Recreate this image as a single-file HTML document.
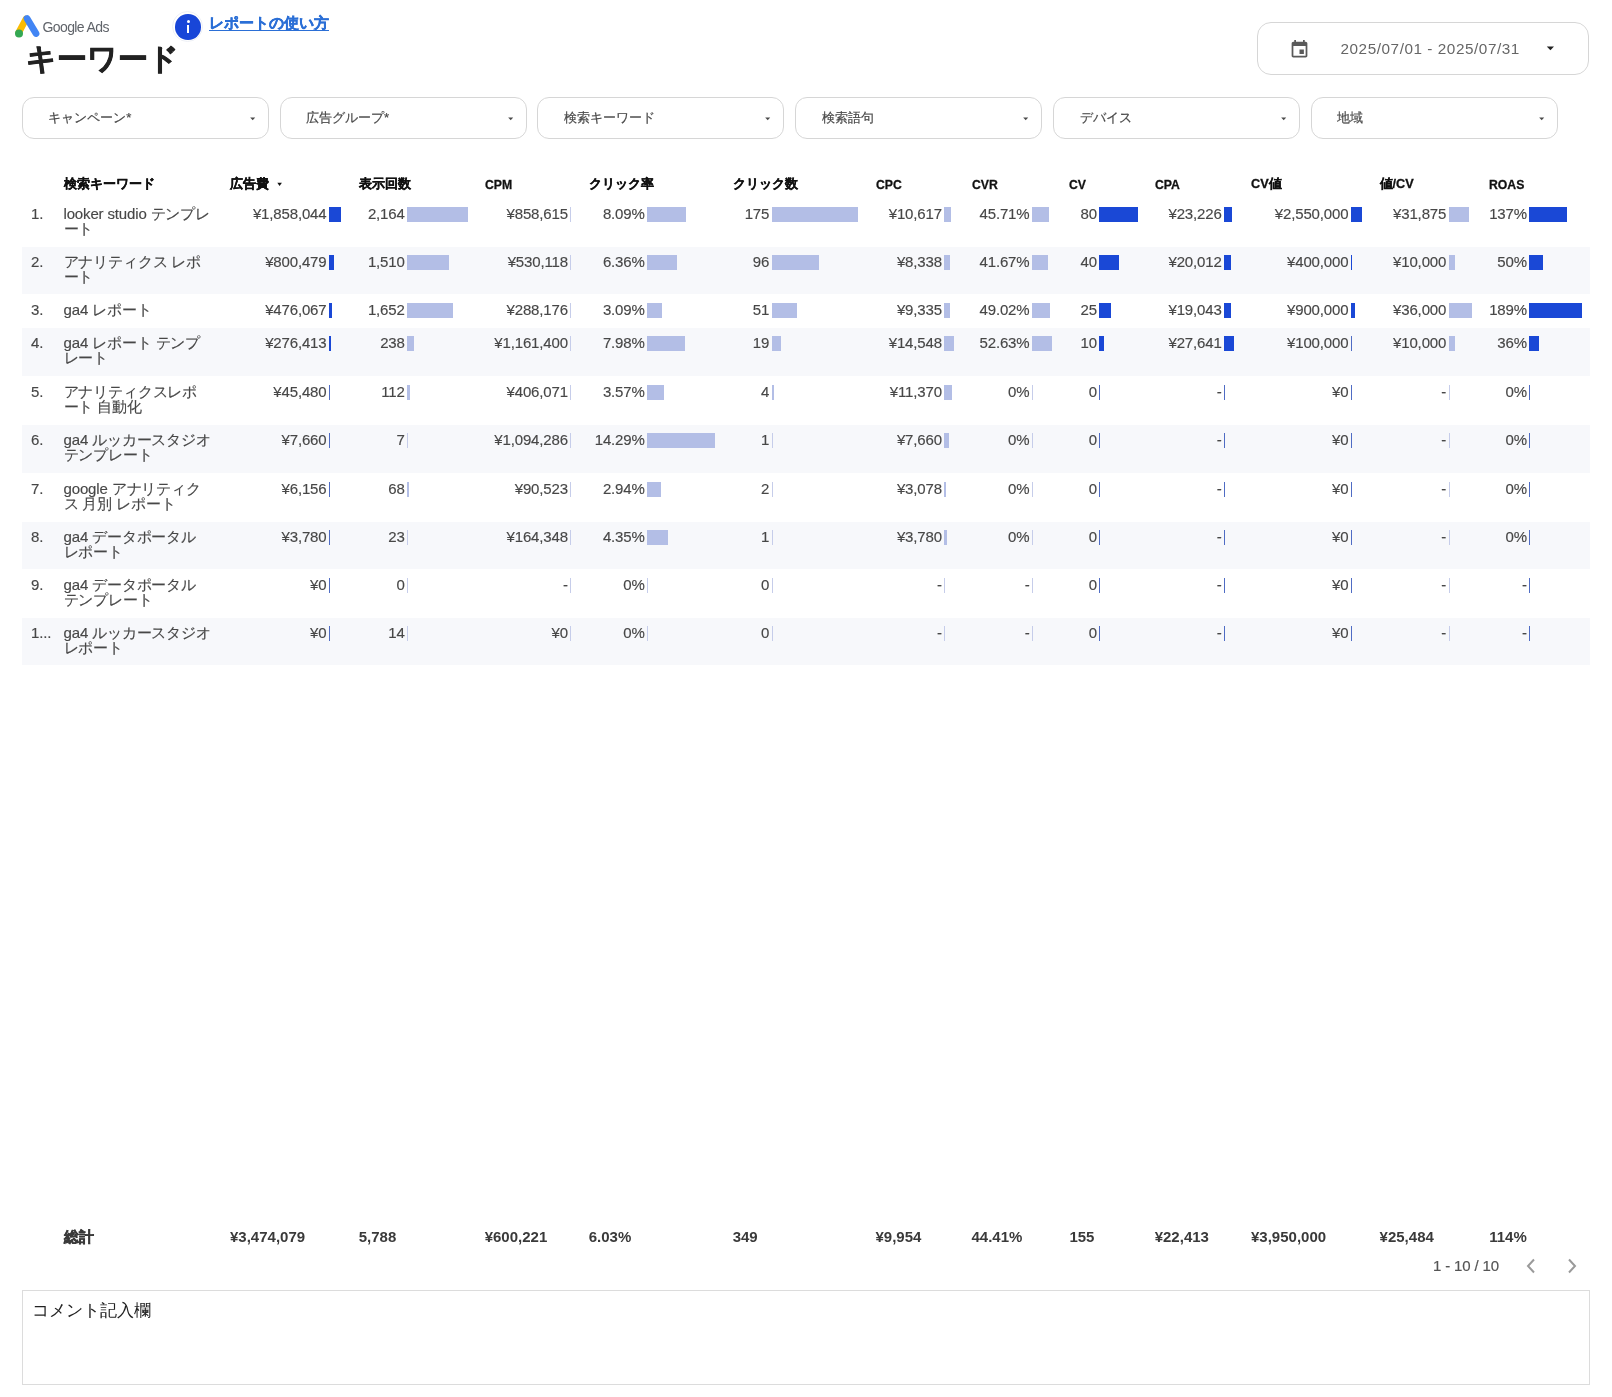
<!DOCTYPE html>
<html lang="ja"><head><meta charset="utf-8"><style>
html,body{margin:0;padding:0;background:#fff;width:1612px;height:1397px;overflow:hidden;position:relative;font-family:"Liberation Sans", sans-serif;}
.a{position:absolute;white-space:nowrap;}
.d{position:absolute;white-space:nowrap;font-size:15px;line-height:15px;color:#474747;letter-spacing:-0.15px;-webkit-text-stroke:0.15px #474747;}
.r{text-align:right;}
.h{position:absolute;white-space:nowrap;font-size:12.7px;line-height:15px;font-weight:900;color:#111;-webkit-text-stroke:0.3px #111;}
.t{position:absolute;white-space:nowrap;font-size:15px;line-height:15px;font-weight:bold;color:#3a3a3a;}
.b{position:absolute;height:15px;}
.st{position:absolute;left:22px;width:1568px;background:#f7f8fb;}
.fb{position:absolute;top:96.5px;width:245px;height:40.5px;border:1px solid #d6d6d6;border-radius:12px;background:#fff;}
.fl{position:absolute;left:25.5px;top:12.2px;font-size:13.2px;line-height:15px;color:#4a4a4a;-webkit-text-stroke:0.2px #4a4a4a;}
.ar{position:absolute;width:0;height:0;border-left:3px solid transparent;border-right:3px solid transparent;border-top:3px solid #333;}
#w{position:absolute;left:0;top:0;width:1612px;height:1397px;will-change:transform;}
</style></head><body><div id="w">

<svg class="a" style="left:12px;top:13px" width="32" height="27" viewBox="0 0 32 27">
<line x1="14" y1="6" x2="7" y2="19" stroke="#fbbc04" stroke-width="6.8" stroke-linecap="round"/>
<line x1="15" y1="5.5" x2="24" y2="20.5" stroke="#4285f4" stroke-width="6.8" stroke-linecap="round"/>
<circle cx="7" cy="20.5" r="4" fill="#34a853"/>
</svg>
<div class="a" style="left:42.5px;top:19px;font-size:14px;line-height:17px;color:#60646a;letter-spacing:-0.6px">Google Ads</div>
<div class="a" style="left:172.3px;top:11px;width:29px;height:29px;border-radius:50%;border:1.5px solid #eef0f5;background:#fff"></div>
<div class="a" style="left:175.3px;top:14px;width:25.5px;height:25.5px;border-radius:50%;background:#1846d8"></div>
<div class="a" style="left:186.5px;top:19.8px;width:3.2px;height:3.2px;border-radius:50%;background:#fff"></div>
<div class="a" style="left:186.8px;top:25px;width:2.6px;height:7.8px;background:#fff"></div>
<div class="a" style="left:209px;top:13px;font-size:15px;line-height:20px;font-weight:900;color:#2b6fd6;-webkit-text-stroke:0.4px #2b6fd6;text-decoration:underline;text-underline-offset:2px">レポートの使い方</div>
<div class="a" style="left:26px;top:41px;font-size:30px;line-height:36px;font-weight:900;color:#222;-webkit-text-stroke:0.7px #222">キーワード</div>
<div class="a" style="left:1257px;top:21.5px;width:330px;height:51px;border:1px solid #d6d6d6;border-radius:14px;background:#fff"></div>
<svg class="a" style="left:1289px;top:38.8px" width="21" height="21" viewBox="0 0 24 24"><path fill="#5a5a5a" d="M17 12h-5v5h5v-5zM16 1v2H8V1H6v2H5c-1.11 0-1.99.9-1.99 2L3 19c0 1.1.89 2 2 2h14c1.1 0 2-.9 2-2V5c0-1.1-.9-2-2-2h-1V1h-2zm3 18H5V8h14v11z"/></svg>
<div class="a" style="left:1340.5px;top:39.8px;font-size:15.3px;line-height:18px;color:#666;letter-spacing:0.55px">2025/07/01 - 2025/07/31</div>
<svg class="a" style="left:1544px;top:44px" width="14" height="10"><polygon points="2.8,2.6 10,2.6 6.4,6.2" fill="#222"/></svg>
<div class="fb" style="left:21.8px"><div class="fl">キャンペーン*</div><svg class="a" style="left:224px;top:17.2px" width="12" height="8"><polygon points="3.2,2.6 8.2,2.6 5.7,5.2" fill="#4a4a4a"/></svg></div>
<div class="fb" style="left:279.6px"><div class="fl">広告グループ*</div><svg class="a" style="left:224px;top:17.2px" width="12" height="8"><polygon points="3.2,2.6 8.2,2.6 5.7,5.2" fill="#4a4a4a"/></svg></div>
<div class="fb" style="left:537.4px"><div class="fl">検索キーワード</div><svg class="a" style="left:224px;top:17.2px" width="12" height="8"><polygon points="3.2,2.6 8.2,2.6 5.7,5.2" fill="#4a4a4a"/></svg></div>
<div class="fb" style="left:795.2px"><div class="fl">検索語句</div><svg class="a" style="left:224px;top:17.2px" width="12" height="8"><polygon points="3.2,2.6 8.2,2.6 5.7,5.2" fill="#4a4a4a"/></svg></div>
<div class="fb" style="left:1053.0px"><div class="fl">デバイス</div><svg class="a" style="left:224px;top:17.2px" width="12" height="8"><polygon points="3.2,2.6 8.2,2.6 5.7,5.2" fill="#4a4a4a"/></svg></div>
<div class="fb" style="left:1310.8px"><div class="fl">地域</div><svg class="a" style="left:224px;top:17.2px" width="12" height="8"><polygon points="3.2,2.6 8.2,2.6 5.7,5.2" fill="#4a4a4a"/></svg></div>
<div class="h" style="left:63.7px;top:177px">検索キーワード</div>
<div class="h" style="left:230px;top:177px">広告費</div>
<div class="h" style="left:358.7px;top:177px">表示回数</div>
<div class="h" style="left:484.7px;top:176.5px;font-size:13.6px;transform:scaleX(0.9);transform-origin:0 0">CPM</div>
<div class="h" style="left:588.7px;top:177px">クリック率</div>
<div class="h" style="left:732.7px;top:177px">クリック数</div>
<div class="h" style="left:875.5px;top:176.5px;font-size:13.6px;transform:scaleX(0.9);transform-origin:0 0">CPC</div>
<div class="h" style="left:971.5px;top:176.5px;font-size:13.6px;transform:scaleX(0.9);transform-origin:0 0">CVR</div>
<div class="h" style="left:1069.4px;top:176.5px;font-size:13.6px;transform:scaleX(0.9);transform-origin:0 0">CV</div>
<div class="h" style="left:1154.7px;top:176.5px;font-size:13.6px;transform:scaleX(0.9);transform-origin:0 0">CPA</div>
<div class="h" style="left:1251px;top:177px">CV値</div>
<div class="h" style="left:1379.6px;top:177px">値/CV</div>
<div class="h" style="left:1489.2px;top:176.5px;font-size:13.6px;transform:scaleX(0.9);transform-origin:0 0">ROAS</div>
<svg class="a" style="left:274px;top:180px" width="12" height="10"><polygon points="3.3,2.8 7.9,2.8 5.6,6.1" fill="#111"/></svg>
<div class="st" style="top:246.5px;height:47.5px"></div>
<div class="st" style="top:328px;height:48px"></div>
<div class="st" style="top:425px;height:47.5px"></div>
<div class="st" style="top:522px;height:47.200000000000045px"></div>
<div class="st" style="top:618px;height:47px"></div>
<div class="d" style="left:31px;top:205.7px">1.</div>
<div class="d" style="left:63.5px;top:205.7px">looker studio テンプレ</div>
<div class="d" style="left:63.5px;top:220.7px">ート</div>
<div class="d r" style="right:1285.5px;top:205.7px">¥1,858,044</div>
<div class="b" style="left:328.8px;top:206.7px;width:12.0px;background:#1a48d6"></div>
<div class="d r" style="right:1207.3px;top:205.7px">2,164</div>
<div class="b" style="left:407px;top:206.7px;width:60.7px;background:#b3bee6"></div>
<div class="d r" style="right:1044.1px;top:205.7px">¥858,615</div>
<div class="b" style="left:570.2px;top:206.7px;width:1.3px;background:#c6cdea"></div>
<div class="d r" style="right:967.3px;top:205.7px">8.09%</div>
<div class="b" style="left:647px;top:206.7px;width:38.7px;background:#b3bee6"></div>
<div class="d r" style="right:842.8px;top:205.7px">175</div>
<div class="b" style="left:771.5px;top:206.7px;width:86.8px;background:#b3bee6"></div>
<div class="d r" style="right:670.0999999999999px;top:205.7px">¥10,617</div>
<div class="b" style="left:944.2px;top:206.7px;width:7.2px;background:#b3bee6"></div>
<div class="d r" style="right:582.5px;top:205.7px">45.71%</div>
<div class="b" style="left:1031.8px;top:206.7px;width:17.5px;background:#b3bee6"></div>
<div class="d r" style="right:515.0999999999999px;top:205.7px">80</div>
<div class="b" style="left:1099.2px;top:206.7px;width:38.7px;background:#1a48d6"></div>
<div class="d r" style="right:390.39999999999986px;top:205.7px">¥23,226</div>
<div class="b" style="left:1223.9px;top:206.7px;width:8.4px;background:#1a48d6"></div>
<div class="d r" style="right:263.5999999999999px;top:205.7px">¥2,550,000</div>
<div class="b" style="left:1350.7px;top:206.7px;width:11.0px;background:#1a48d6"></div>
<div class="d r" style="right:165.79999999999995px;top:205.7px">¥31,875</div>
<div class="b" style="left:1448.5px;top:206.7px;width:20.8px;background:#b3bee6"></div>
<div class="d r" style="right:85.09999999999991px;top:205.7px">137%</div>
<div class="b" style="left:1529.2px;top:206.7px;width:38.0px;background:#1a48d6"></div>
<div class="d" style="left:31px;top:253.8px">2.</div>
<div class="d" style="left:63.5px;top:253.8px">アナリティクス レポ</div>
<div class="d" style="left:63.5px;top:268.8px">ート</div>
<div class="d r" style="right:1285.5px;top:253.8px">¥800,479</div>
<div class="b" style="left:328.8px;top:254.8px;width:5.2px;background:#1a48d6"></div>
<div class="d r" style="right:1207.3px;top:253.8px">1,510</div>
<div class="b" style="left:407px;top:254.8px;width:42.4px;background:#b3bee6"></div>
<div class="d r" style="right:1044.1px;top:253.8px">¥530,118</div>
<div class="b" style="left:570.2px;top:254.8px;width:1.3px;background:#c6cdea"></div>
<div class="d r" style="right:967.3px;top:253.8px">6.36%</div>
<div class="b" style="left:647px;top:254.8px;width:30.4px;background:#b3bee6"></div>
<div class="d r" style="right:842.8px;top:253.8px">96</div>
<div class="b" style="left:771.5px;top:254.8px;width:47.6px;background:#b3bee6"></div>
<div class="d r" style="right:670.0999999999999px;top:253.8px">¥8,338</div>
<div class="b" style="left:944.2px;top:254.8px;width:5.6px;background:#b3bee6"></div>
<div class="d r" style="right:582.5px;top:253.8px">41.67%</div>
<div class="b" style="left:1031.8px;top:254.8px;width:15.9px;background:#b3bee6"></div>
<div class="d r" style="right:515.0999999999999px;top:253.8px">40</div>
<div class="b" style="left:1099.2px;top:254.8px;width:19.4px;background:#1a48d6"></div>
<div class="d r" style="right:390.39999999999986px;top:253.8px">¥20,012</div>
<div class="b" style="left:1223.9px;top:254.8px;width:7.2px;background:#1a48d6"></div>
<div class="d r" style="right:263.5999999999999px;top:253.8px">¥400,000</div>
<div class="b" style="left:1350.7px;top:254.8px;width:1.7px;background:#1a48d6"></div>
<div class="d r" style="right:165.79999999999995px;top:253.8px">¥10,000</div>
<div class="b" style="left:1448.5px;top:254.8px;width:6.5px;background:#b3bee6"></div>
<div class="d r" style="right:85.09999999999991px;top:253.8px">50%</div>
<div class="b" style="left:1529.2px;top:254.8px;width:13.9px;background:#1a48d6"></div>
<div class="d" style="left:31px;top:301.9px">3.</div>
<div class="d" style="left:63.5px;top:301.9px">ga4 レポート</div>
<div class="d r" style="right:1285.5px;top:301.9px">¥476,067</div>
<div class="b" style="left:328.8px;top:302.9px;width:3.1px;background:#1a48d6"></div>
<div class="d r" style="right:1207.3px;top:301.9px">1,652</div>
<div class="b" style="left:407px;top:302.9px;width:46.3px;background:#b3bee6"></div>
<div class="d r" style="right:1044.1px;top:301.9px">¥288,176</div>
<div class="b" style="left:570.2px;top:302.9px;width:1.3px;background:#c6cdea"></div>
<div class="d r" style="right:967.3px;top:301.9px">3.09%</div>
<div class="b" style="left:647px;top:302.9px;width:14.8px;background:#b3bee6"></div>
<div class="d r" style="right:842.8px;top:301.9px">51</div>
<div class="b" style="left:771.5px;top:302.9px;width:25.3px;background:#b3bee6"></div>
<div class="d r" style="right:670.0999999999999px;top:301.9px">¥9,335</div>
<div class="b" style="left:944.2px;top:302.9px;width:6.3px;background:#b3bee6"></div>
<div class="d r" style="right:582.5px;top:301.9px">49.02%</div>
<div class="b" style="left:1031.8px;top:302.9px;width:18.7px;background:#b3bee6"></div>
<div class="d r" style="right:515.0999999999999px;top:301.9px">25</div>
<div class="b" style="left:1099.2px;top:302.9px;width:12.1px;background:#1a48d6"></div>
<div class="d r" style="right:390.39999999999986px;top:301.9px">¥19,043</div>
<div class="b" style="left:1223.9px;top:302.9px;width:6.9px;background:#1a48d6"></div>
<div class="d r" style="right:263.5999999999999px;top:301.9px">¥900,000</div>
<div class="b" style="left:1350.7px;top:302.9px;width:3.9px;background:#1a48d6"></div>
<div class="d r" style="right:165.79999999999995px;top:301.9px">¥36,000</div>
<div class="b" style="left:1448.5px;top:302.9px;width:23.5px;background:#b3bee6"></div>
<div class="d r" style="right:85.09999999999991px;top:301.9px">189%</div>
<div class="b" style="left:1529.2px;top:302.9px;width:52.4px;background:#1a48d6"></div>
<div class="d" style="left:31px;top:335.2px">4.</div>
<div class="d" style="left:63.5px;top:335.2px">ga4 レポート テンプ</div>
<div class="d" style="left:63.5px;top:350.2px">レート</div>
<div class="d r" style="right:1285.5px;top:335.2px">¥276,413</div>
<div class="b" style="left:328.8px;top:336.2px;width:1.8px;background:#1a48d6"></div>
<div class="d r" style="right:1207.3px;top:335.2px">238</div>
<div class="b" style="left:407px;top:336.2px;width:6.7px;background:#b3bee6"></div>
<div class="d r" style="right:1044.1px;top:335.2px">¥1,161,400</div>
<div class="b" style="left:570.2px;top:336.2px;width:1.3px;background:#c6cdea"></div>
<div class="d r" style="right:967.3px;top:335.2px">7.98%</div>
<div class="b" style="left:647px;top:336.2px;width:38.2px;background:#b3bee6"></div>
<div class="d r" style="right:842.8px;top:335.2px">19</div>
<div class="b" style="left:771.5px;top:336.2px;width:9.4px;background:#b3bee6"></div>
<div class="d r" style="right:670.0999999999999px;top:335.2px">¥14,548</div>
<div class="b" style="left:944.2px;top:336.2px;width:9.8px;background:#b3bee6"></div>
<div class="d r" style="right:582.5px;top:335.2px">52.63%</div>
<div class="b" style="left:1031.8px;top:336.2px;width:20.1px;background:#b3bee6"></div>
<div class="d r" style="right:515.0999999999999px;top:335.2px">10</div>
<div class="b" style="left:1099.2px;top:336.2px;width:4.8px;background:#1a48d6"></div>
<div class="d r" style="right:390.39999999999986px;top:335.2px">¥27,641</div>
<div class="b" style="left:1223.9px;top:336.2px;width:10.0px;background:#1a48d6"></div>
<div class="d r" style="right:263.5999999999999px;top:335.2px">¥100,000</div>
<div class="b" style="left:1350.7px;top:336.2px;width:1.3px;background:#4f6cc4"></div>
<div class="d r" style="right:165.79999999999995px;top:335.2px">¥10,000</div>
<div class="b" style="left:1448.5px;top:336.2px;width:6.5px;background:#b3bee6"></div>
<div class="d r" style="right:85.09999999999991px;top:335.2px">36%</div>
<div class="b" style="left:1529.2px;top:336.2px;width:10.0px;background:#1a48d6"></div>
<div class="d" style="left:31px;top:383.7px">5.</div>
<div class="d" style="left:63.5px;top:383.7px">アナリティクスレポ</div>
<div class="d" style="left:63.5px;top:398.7px">ート 自動化</div>
<div class="d r" style="right:1285.5px;top:383.7px">¥45,480</div>
<div class="b" style="left:328.8px;top:384.7px;width:1.3px;background:#4f6cc4"></div>
<div class="d r" style="right:1207.3px;top:383.7px">112</div>
<div class="b" style="left:407px;top:384.7px;width:3.1px;background:#b3bee6"></div>
<div class="d r" style="right:1044.1px;top:383.7px">¥406,071</div>
<div class="b" style="left:570.2px;top:384.7px;width:1.3px;background:#c6cdea"></div>
<div class="d r" style="right:967.3px;top:383.7px">3.57%</div>
<div class="b" style="left:647px;top:384.7px;width:17.1px;background:#b3bee6"></div>
<div class="d r" style="right:842.8px;top:383.7px">4</div>
<div class="b" style="left:771.5px;top:384.7px;width:2.0px;background:#b3bee6"></div>
<div class="d r" style="right:670.0999999999999px;top:383.7px">¥11,370</div>
<div class="b" style="left:944.2px;top:384.7px;width:7.7px;background:#b3bee6"></div>
<div class="d r" style="right:582.5px;top:383.7px">0%</div>
<div class="b" style="left:1031.8px;top:384.7px;width:1.3px;background:#c6cdea"></div>
<div class="d r" style="right:515.0999999999999px;top:383.7px">0</div>
<div class="b" style="left:1099.2px;top:384.7px;width:1.3px;background:#4f6cc4"></div>
<div class="d r" style="right:390.39999999999986px;top:383.7px">-</div>
<div class="b" style="left:1223.9px;top:384.7px;width:1.3px;background:#4f6cc4"></div>
<div class="d r" style="right:263.5999999999999px;top:383.7px">¥0</div>
<div class="b" style="left:1350.7px;top:384.7px;width:1.3px;background:#4f6cc4"></div>
<div class="d r" style="right:165.79999999999995px;top:383.7px">-</div>
<div class="b" style="left:1448.5px;top:384.7px;width:1.3px;background:#c6cdea"></div>
<div class="d r" style="right:85.09999999999991px;top:383.7px">0%</div>
<div class="b" style="left:1529.2px;top:384.7px;width:1.3px;background:#4f6cc4"></div>
<div class="d" style="left:31px;top:432.3px">6.</div>
<div class="d" style="left:63.5px;top:432.3px">ga4 ルッカースタジオ</div>
<div class="d" style="left:63.5px;top:447.3px">テンプレート</div>
<div class="d r" style="right:1285.5px;top:432.3px">¥7,660</div>
<div class="b" style="left:328.8px;top:433.3px;width:1.3px;background:#4f6cc4"></div>
<div class="d r" style="right:1207.3px;top:432.3px">7</div>
<div class="b" style="left:407px;top:433.3px;width:1.3px;background:#c6cdea"></div>
<div class="d r" style="right:1044.1px;top:432.3px">¥1,094,286</div>
<div class="b" style="left:570.2px;top:433.3px;width:1.3px;background:#c6cdea"></div>
<div class="d r" style="right:967.3px;top:432.3px">14.29%</div>
<div class="b" style="left:647px;top:433.3px;width:68.4px;background:#b3bee6"></div>
<div class="d r" style="right:842.8px;top:432.3px">1</div>
<div class="b" style="left:771.5px;top:433.3px;width:1.3px;background:#c6cdea"></div>
<div class="d r" style="right:670.0999999999999px;top:432.3px">¥7,660</div>
<div class="b" style="left:944.2px;top:433.3px;width:5.2px;background:#b3bee6"></div>
<div class="d r" style="right:582.5px;top:432.3px">0%</div>
<div class="b" style="left:1031.8px;top:433.3px;width:1.3px;background:#c6cdea"></div>
<div class="d r" style="right:515.0999999999999px;top:432.3px">0</div>
<div class="b" style="left:1099.2px;top:433.3px;width:1.3px;background:#4f6cc4"></div>
<div class="d r" style="right:390.39999999999986px;top:432.3px">-</div>
<div class="b" style="left:1223.9px;top:433.3px;width:1.3px;background:#4f6cc4"></div>
<div class="d r" style="right:263.5999999999999px;top:432.3px">¥0</div>
<div class="b" style="left:1350.7px;top:433.3px;width:1.3px;background:#4f6cc4"></div>
<div class="d r" style="right:165.79999999999995px;top:432.3px">-</div>
<div class="b" style="left:1448.5px;top:433.3px;width:1.3px;background:#c6cdea"></div>
<div class="d r" style="right:85.09999999999991px;top:432.3px">0%</div>
<div class="b" style="left:1529.2px;top:433.3px;width:1.3px;background:#4f6cc4"></div>
<div class="d" style="left:31px;top:480.6px">7.</div>
<div class="d" style="left:63.5px;top:480.6px">google アナリティク</div>
<div class="d" style="left:63.5px;top:495.6px">ス 月別 レポート</div>
<div class="d r" style="right:1285.5px;top:480.6px">¥6,156</div>
<div class="b" style="left:328.8px;top:481.6px;width:1.3px;background:#4f6cc4"></div>
<div class="d r" style="right:1207.3px;top:480.6px">68</div>
<div class="b" style="left:407px;top:481.6px;width:1.9px;background:#b3bee6"></div>
<div class="d r" style="right:1044.1px;top:480.6px">¥90,523</div>
<div class="b" style="left:570.2px;top:481.6px;width:1.3px;background:#c6cdea"></div>
<div class="d r" style="right:967.3px;top:480.6px">2.94%</div>
<div class="b" style="left:647px;top:481.6px;width:14.1px;background:#b3bee6"></div>
<div class="d r" style="right:842.8px;top:480.6px">2</div>
<div class="b" style="left:771.5px;top:481.6px;width:1.3px;background:#c6cdea"></div>
<div class="d r" style="right:670.0999999999999px;top:480.6px">¥3,078</div>
<div class="b" style="left:944.2px;top:481.6px;width:2.1px;background:#b3bee6"></div>
<div class="d r" style="right:582.5px;top:480.6px">0%</div>
<div class="b" style="left:1031.8px;top:481.6px;width:1.3px;background:#c6cdea"></div>
<div class="d r" style="right:515.0999999999999px;top:480.6px">0</div>
<div class="b" style="left:1099.2px;top:481.6px;width:1.3px;background:#4f6cc4"></div>
<div class="d r" style="right:390.39999999999986px;top:480.6px">-</div>
<div class="b" style="left:1223.9px;top:481.6px;width:1.3px;background:#4f6cc4"></div>
<div class="d r" style="right:263.5999999999999px;top:480.6px">¥0</div>
<div class="b" style="left:1350.7px;top:481.6px;width:1.3px;background:#4f6cc4"></div>
<div class="d r" style="right:165.79999999999995px;top:480.6px">-</div>
<div class="b" style="left:1448.5px;top:481.6px;width:1.3px;background:#c6cdea"></div>
<div class="d r" style="right:85.09999999999991px;top:480.6px">0%</div>
<div class="b" style="left:1529.2px;top:481.6px;width:1.3px;background:#4f6cc4"></div>
<div class="d" style="left:31px;top:528.8px">8.</div>
<div class="d" style="left:63.5px;top:528.8px">ga4 データポータル</div>
<div class="d" style="left:63.5px;top:543.8px">レポート</div>
<div class="d r" style="right:1285.5px;top:528.8px">¥3,780</div>
<div class="b" style="left:328.8px;top:529.8px;width:1.3px;background:#4f6cc4"></div>
<div class="d r" style="right:1207.3px;top:528.8px">23</div>
<div class="b" style="left:407px;top:529.8px;width:1.3px;background:#c6cdea"></div>
<div class="d r" style="right:1044.1px;top:528.8px">¥164,348</div>
<div class="b" style="left:570.2px;top:529.8px;width:1.3px;background:#c6cdea"></div>
<div class="d r" style="right:967.3px;top:528.8px">4.35%</div>
<div class="b" style="left:647px;top:529.8px;width:20.8px;background:#b3bee6"></div>
<div class="d r" style="right:842.8px;top:528.8px">1</div>
<div class="b" style="left:771.5px;top:529.8px;width:1.3px;background:#c6cdea"></div>
<div class="d r" style="right:670.0999999999999px;top:528.8px">¥3,780</div>
<div class="b" style="left:944.2px;top:529.8px;width:2.5px;background:#b3bee6"></div>
<div class="d r" style="right:582.5px;top:528.8px">0%</div>
<div class="b" style="left:1031.8px;top:529.8px;width:1.3px;background:#c6cdea"></div>
<div class="d r" style="right:515.0999999999999px;top:528.8px">0</div>
<div class="b" style="left:1099.2px;top:529.8px;width:1.3px;background:#4f6cc4"></div>
<div class="d r" style="right:390.39999999999986px;top:528.8px">-</div>
<div class="b" style="left:1223.9px;top:529.8px;width:1.3px;background:#4f6cc4"></div>
<div class="d r" style="right:263.5999999999999px;top:528.8px">¥0</div>
<div class="b" style="left:1350.7px;top:529.8px;width:1.3px;background:#4f6cc4"></div>
<div class="d r" style="right:165.79999999999995px;top:528.8px">-</div>
<div class="b" style="left:1448.5px;top:529.8px;width:1.3px;background:#c6cdea"></div>
<div class="d r" style="right:85.09999999999991px;top:528.8px">0%</div>
<div class="b" style="left:1529.2px;top:529.8px;width:1.3px;background:#4f6cc4"></div>
<div class="d" style="left:31px;top:576.6px">9.</div>
<div class="d" style="left:63.5px;top:576.6px">ga4 データポータル</div>
<div class="d" style="left:63.5px;top:591.6px">テンプレート</div>
<div class="d r" style="right:1285.5px;top:576.6px">¥0</div>
<div class="b" style="left:328.8px;top:577.6px;width:1.3px;background:#4f6cc4"></div>
<div class="d r" style="right:1207.3px;top:576.6px">0</div>
<div class="b" style="left:407px;top:577.6px;width:1.3px;background:#c6cdea"></div>
<div class="d r" style="right:1044.1px;top:576.6px">-</div>
<div class="b" style="left:570.2px;top:577.6px;width:1.3px;background:#c6cdea"></div>
<div class="d r" style="right:967.3px;top:576.6px">0%</div>
<div class="b" style="left:647px;top:577.6px;width:1.3px;background:#c6cdea"></div>
<div class="d r" style="right:842.8px;top:576.6px">0</div>
<div class="b" style="left:771.5px;top:577.6px;width:1.3px;background:#c6cdea"></div>
<div class="d r" style="right:670.0999999999999px;top:576.6px">-</div>
<div class="b" style="left:944.2px;top:577.6px;width:1.3px;background:#c6cdea"></div>
<div class="d r" style="right:582.5px;top:576.6px">-</div>
<div class="b" style="left:1031.8px;top:577.6px;width:1.3px;background:#c6cdea"></div>
<div class="d r" style="right:515.0999999999999px;top:576.6px">0</div>
<div class="b" style="left:1099.2px;top:577.6px;width:1.3px;background:#4f6cc4"></div>
<div class="d r" style="right:390.39999999999986px;top:576.6px">-</div>
<div class="b" style="left:1223.9px;top:577.6px;width:1.3px;background:#4f6cc4"></div>
<div class="d r" style="right:263.5999999999999px;top:576.6px">¥0</div>
<div class="b" style="left:1350.7px;top:577.6px;width:1.3px;background:#4f6cc4"></div>
<div class="d r" style="right:165.79999999999995px;top:576.6px">-</div>
<div class="b" style="left:1448.5px;top:577.6px;width:1.3px;background:#c6cdea"></div>
<div class="d r" style="right:85.09999999999991px;top:576.6px">-</div>
<div class="b" style="left:1529.2px;top:577.6px;width:1.3px;background:#4f6cc4"></div>
<div class="d" style="left:31px;top:625.2px">1...</div>
<div class="d" style="left:63.5px;top:625.2px">ga4 ルッカースタジオ</div>
<div class="d" style="left:63.5px;top:640.2px">レポート</div>
<div class="d r" style="right:1285.5px;top:625.2px">¥0</div>
<div class="b" style="left:328.8px;top:626.2px;width:1.3px;background:#4f6cc4"></div>
<div class="d r" style="right:1207.3px;top:625.2px">14</div>
<div class="b" style="left:407px;top:626.2px;width:1.3px;background:#c6cdea"></div>
<div class="d r" style="right:1044.1px;top:625.2px">¥0</div>
<div class="b" style="left:570.2px;top:626.2px;width:1.3px;background:#c6cdea"></div>
<div class="d r" style="right:967.3px;top:625.2px">0%</div>
<div class="b" style="left:647px;top:626.2px;width:1.3px;background:#c6cdea"></div>
<div class="d r" style="right:842.8px;top:625.2px">0</div>
<div class="b" style="left:771.5px;top:626.2px;width:1.3px;background:#c6cdea"></div>
<div class="d r" style="right:670.0999999999999px;top:625.2px">-</div>
<div class="b" style="left:944.2px;top:626.2px;width:1.3px;background:#c6cdea"></div>
<div class="d r" style="right:582.5px;top:625.2px">-</div>
<div class="b" style="left:1031.8px;top:626.2px;width:1.3px;background:#c6cdea"></div>
<div class="d r" style="right:515.0999999999999px;top:625.2px">0</div>
<div class="b" style="left:1099.2px;top:626.2px;width:1.3px;background:#4f6cc4"></div>
<div class="d r" style="right:390.39999999999986px;top:625.2px">-</div>
<div class="b" style="left:1223.9px;top:626.2px;width:1.3px;background:#4f6cc4"></div>
<div class="d r" style="right:263.5999999999999px;top:625.2px">¥0</div>
<div class="b" style="left:1350.7px;top:626.2px;width:1.3px;background:#4f6cc4"></div>
<div class="d r" style="right:165.79999999999995px;top:625.2px">-</div>
<div class="b" style="left:1448.5px;top:626.2px;width:1.3px;background:#c6cdea"></div>
<div class="d r" style="right:85.09999999999991px;top:625.2px">-</div>
<div class="b" style="left:1529.2px;top:626.2px;width:1.3px;background:#4f6cc4"></div>
<div class="t" style="left:63.7px;top:1229px;-webkit-text-stroke:0.45px #3a3a3a">総計</div>
<div class="t" style="left:230px;top:1229px">¥3,474,079</div>
<div class="t" style="left:358.7px;top:1229px">5,788</div>
<div class="t" style="left:484.7px;top:1229px">¥600,221</div>
<div class="t" style="left:588.7px;top:1229px">6.03%</div>
<div class="t" style="left:732.7px;top:1229px">349</div>
<div class="t" style="left:875.5px;top:1229px">¥9,954</div>
<div class="t" style="left:971.5px;top:1229px">44.41%</div>
<div class="t" style="left:1069.4px;top:1229px">155</div>
<div class="t" style="left:1154.7px;top:1229px">¥22,413</div>
<div class="t" style="left:1251px;top:1229px">¥3,950,000</div>
<div class="t" style="left:1379.6px;top:1229px">¥25,484</div>
<div class="t" style="left:1489.2px;top:1229px">114%</div>
<div class="d" style="left:1433px;top:1258px;color:#555">1 - 10 / 10</div>
<svg class="a" style="left:1524px;top:1257px" width="14" height="18" viewBox="0 0 14 18"><polyline points="10,2.5 4,9 10,15.5" fill="none" stroke="#9a9a9a" stroke-width="2"/></svg>
<svg class="a" style="left:1565px;top:1257px" width="14" height="18" viewBox="0 0 14 18"><polyline points="4,2.5 10,9 4,15.5" fill="none" stroke="#9a9a9a" stroke-width="2"/></svg>
<div class="a" style="left:22px;top:1290px;width:1566px;height:93px;border:1px solid #dcdcdc;background:#fff"></div>
<div class="a" style="left:32px;top:1300px;font-size:16.5px;line-height:20px;color:#222">コメント記入欄</div>
</div></body></html>
